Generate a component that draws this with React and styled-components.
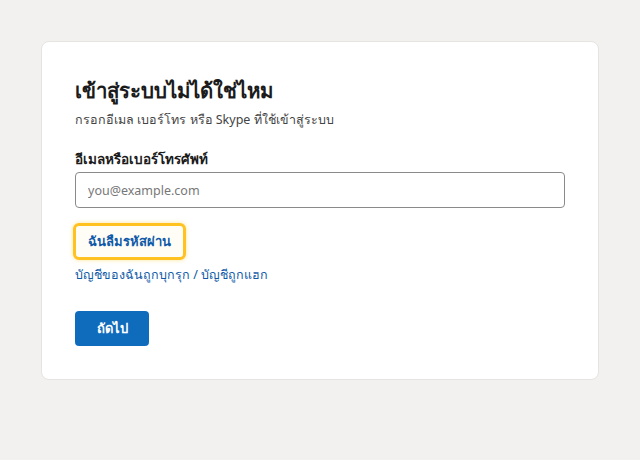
import React from "react";
import styled, { createGlobalStyle } from "styled-components";

const GlobalStyle = createGlobalStyle`
  html, body {
    margin: 0;
    padding: 0;
    background: #f2f1ef;
    font-family: "Noto Sans", "Open Sans", sans-serif;
  }
`;

const Page = styled.div`
  width: 640px;
  height: 460px;
  box-sizing: border-box;
  padding: 41px;
`;

const Card = styled.section`
  box-sizing: border-box;
  width: 558px;
  height: 339px;
  background: #ffffff;
  border: 1px solid #e6e4e1;
  border-radius: 8px;
  padding: 33px 33px;
  display: flex;
  flex-direction: column;
`;

const Title = styled.h1`
  margin: 0;
  font-size: 20.4px;
  font-weight: 700;
  color: #1b1b1b;
  line-height: 30px;
`;

const Subtitle = styled.p`
  margin: 6px 0 0;
  font-size: 12.5px;
  color: #444;
  line-height: 18px;
`;

const Label = styled.label`
  margin-top: 20px;
  font-size: 13.5px;
  font-weight: 600;
  color: #1b1b1b;
  line-height: 20px;
`;

const Input = styled.input`
  margin-top: 3px;
  box-sizing: border-box;
  width: 490px;
  height: 36px;
  border: 1px solid #8a8a8a;
  border-radius: 4px;
  padding: 0 12px;
  font-family: inherit;
  font-size: 12.5px;
  color: #1b1b1b;
  outline: none;
  &::placeholder {
    color: #777;
  }
`;

const FocusButton = styled.button`
  align-self: flex-start;
  margin-top: 15px;
  margin-left: -2px;
  box-sizing: border-box;
  height: 37px;
  padding: 0 12px;
  background: #fffdf6;
  border: 3px solid #ffc221;
  border-radius: 6px;
  box-shadow: 0 0 4px rgba(255, 194, 33, 0.45);
  font-family: inherit;
  font-size: 13px;
  font-weight: 700;
  color: #0f5aa8;
  cursor: pointer;
`;

const Link = styled.a`
  margin-top: 6px;
  font-size: 12.5px;
  color: #0f5aa8;
  line-height: 18px;
  text-decoration: none;
  cursor: pointer;
`;

const Primary = styled.button`
  align-self: flex-start;
  margin-top: 27px;
  width: 74px;
  height: 35px;
  background: #0f6cbd;
  color: #fff;
  border: none;
  border-radius: 4px;
  font-family: inherit;
  font-size: 13px;
  font-weight: 600;
  cursor: pointer;
`;

export default function App() {
  return (
    <>
      <GlobalStyle />
      <Page>
        <Card>
          <Title>เข้าสู่ระบบไม่ได้ใช่ไหม</Title>
          <Subtitle>กรอกอีเมล เบอร์โทร หรือ Skype ที่ใช้เข้าสู่ระบบ</Subtitle>
          <Label htmlFor="acct">อีเมลหรือเบอร์โทรศัพท์</Label>
          <Input id="acct" type="text" placeholder="you@example.com" />
          <FocusButton>ฉันลืมรหัสผ่าน</FocusButton>
          <Link>บัญชีของฉันถูกบุกรุก / บัญชีถูกแฮก</Link>
          <Primary>ถัดไป</Primary>
        </Card>
      </Page>
    </>
  );
}
